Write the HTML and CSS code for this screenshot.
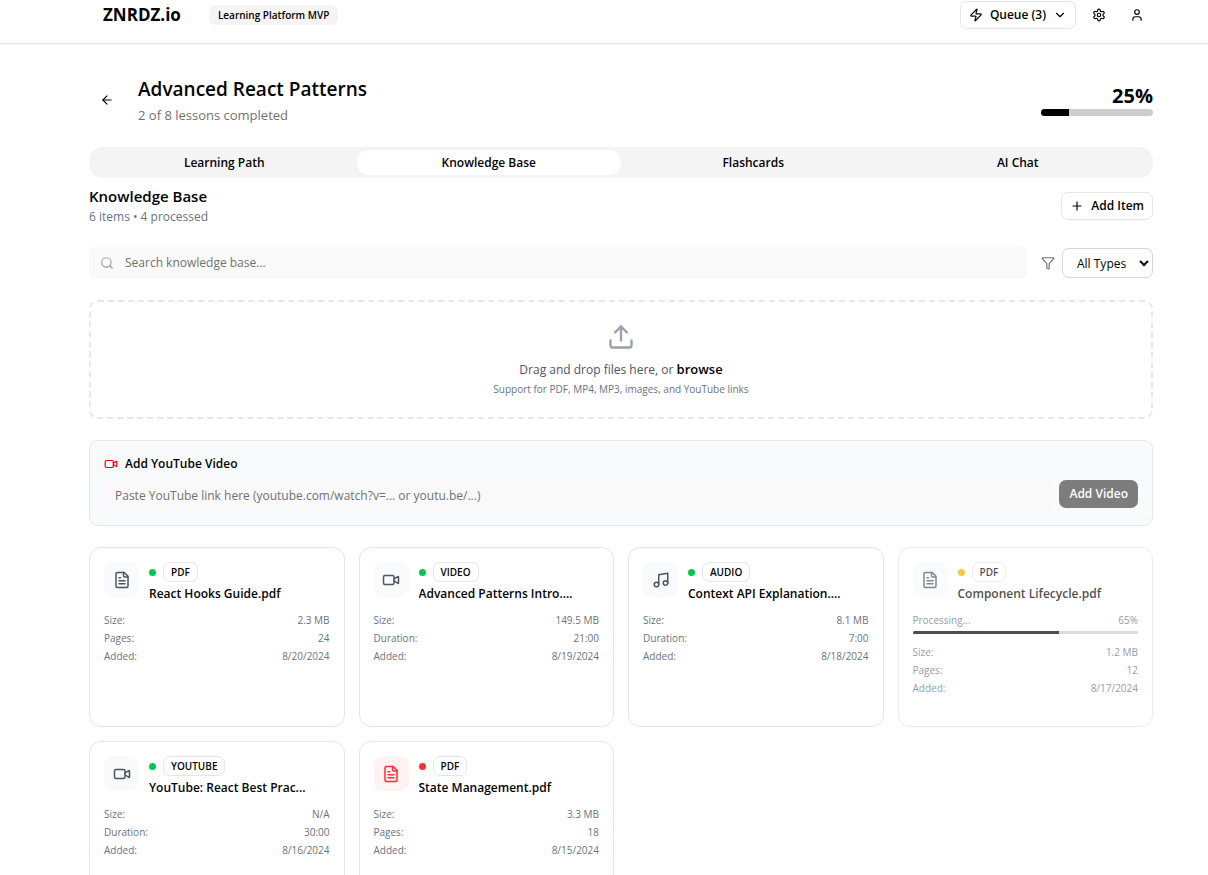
FILE: index.html
```
<!DOCTYPE html>
<html lang="en">
<head>
    <meta charset="UTF-8">
    <meta name="viewport" content="width=device-width, initial-scale=1.0">
    <title>ZNRDZ.io - Learning Platform</title>
    <link rel="stylesheet" href="styles.css">
</head>
<body>
    <!-- Icon set -->
    <svg class="icon-defs" aria-hidden="true">
        <symbol id="icon-zap" viewBox="0 0 24 24"><path d="M4 14a1 1 0 0 1-.78-1.63l9.9-10.2a.5.5 0 0 1 .86.46l-1.92 6.02A1 1 0 0 0 13 10h7a1 1 0 0 1 .78 1.63l-9.9 10.2a.5.5 0 0 1-.86-.46l1.92-6.02A1 1 0 0 0 11 14z"/></symbol>
        <symbol id="icon-chevron" viewBox="0 0 24 24"><path d="m6 9 6 6 6-6"/></symbol>
        <symbol id="icon-settings" viewBox="0 0 24 24"><path d="M12.22 2h-.44a2 2 0 0 0-2 2v.18a2 2 0 0 1-1 1.73l-.43.25a2 2 0 0 1-2 0l-.15-.08a2 2 0 0 0-2.73.73l-.22.38a2 2 0 0 0 .73 2.73l.15.1a2 2 0 0 1 1 1.72v.51a2 2 0 0 1-1 1.74l-.15.09a2 2 0 0 0-.73 2.73l.22.38a2 2 0 0 0 2.73.73l.15-.08a2 2 0 0 1 2 0l.43.25a2 2 0 0 1 1 1.73V20a2 2 0 0 0 2 2h.44a2 2 0 0 0 2-2v-.18a2 2 0 0 1 1-1.73l.43-.25a2 2 0 0 1 2 0l.15.08a2 2 0 0 0 2.73-.73l.22-.39a2 2 0 0 0-.73-2.73l-.15-.08a2 2 0 0 1-1-1.74v-.5a2 2 0 0 1 1-1.74l.15-.09a2 2 0 0 0 .73-2.73l-.22-.38a2 2 0 0 0-2.73-.73l-.15.08a2 2 0 0 1-2 0l-.43-.25a2 2 0 0 1-1-1.73V4a2 2 0 0 0-2-2z"/><circle cx="12" cy="12" r="3"/></symbol>
        <symbol id="icon-user" viewBox="0 0 24 24"><path d="M19 21v-2a4 4 0 0 0-4-4H9a4 4 0 0 0-4 4v2"/><circle cx="12" cy="7" r="4"/></symbol>
        <symbol id="icon-back" viewBox="0 0 24 24"><path d="m12 19-7-7 7-7"/><path d="M19 12H5"/></symbol>
        <symbol id="icon-plus" viewBox="0 0 24 24"><path d="M5 12h14"/><path d="M12 5v14"/></symbol>
        <symbol id="icon-search" viewBox="0 0 24 24"><circle cx="11" cy="11" r="8"/><path d="m21 21-4.3-4.3"/></symbol>
        <symbol id="icon-filter" viewBox="0 0 24 24"><path d="M10 20a1 1 0 0 0 .553.895l2 1A1 1 0 0 0 14 21v-7a2 2 0 0 1 .517-1.341L21.74 4.67A1 1 0 0 0 21 3H3a1 1 0 0 0-.742 1.67l7.225 7.989A2 2 0 0 1 10 14z"/></symbol>
        <symbol id="icon-upload" viewBox="0 0 24 24"><path d="M12 3v12"/><path d="m17 8-5-5-5 5"/><path d="M21 15v4a2 2 0 0 1-2 2H5a2 2 0 0 1-2-2v-4"/></symbol>
        <symbol id="icon-video" viewBox="0 0 24 24"><path d="m16 13 5.223 3.482a.5.5 0 0 0 .777-.416V7.87a.5.5 0 0 0-.752-.432L16 10.5"/><rect x="2" y="6" width="14" height="12" rx="2"/></symbol>
        <symbol id="icon-file" viewBox="0 0 24 24"><path d="M15 2H6a2 2 0 0 0-2 2v16a2 2 0 0 0 2 2h12a2 2 0 0 0 2-2V7Z"/><path d="M14 2v4a2 2 0 0 0 2 2h4"/><path d="M10 9H8"/><path d="M16 13H8"/><path d="M16 17H8"/></symbol>
        <symbol id="icon-music" viewBox="0 0 24 24"><path d="M9 18V5l12-2v13"/><circle cx="6" cy="18" r="3"/><circle cx="18" cy="16" r="3"/></symbol>
    </svg>

    <header class="header">
        <div class="brand">
            <span class="logo">ZNRDZ.io</span>
            <span class="tag">Learning Platform MVP</span>
        </div>
        <div class="header-actions">
            <button class="btn btn-outline" type="button">
                <svg class="icon"><use href="#icon-zap"/></svg>
                Queue (3)
                <svg class="icon"><use href="#icon-chevron"/></svg>
            </button>
            <div class="header-icons">
                <button class="btn-icon" type="button" aria-label="Settings"><svg class="icon"><use href="#icon-settings"/></svg></button>
                <button class="btn-icon" type="button" aria-label="Account"><svg class="icon"><use href="#icon-user"/></svg></button>
            </div>
        </div>
    </header>

    <main class="main">
        <div class="course">
            <button class="btn-icon" type="button" aria-label="Back"><svg class="icon"><use href="#icon-back"/></svg></button>
            <div class="course-info">
                <h1>Advanced React Patterns</h1>
                <p>2 of 8 lessons completed</p>
            </div>
            <div class="course-progress">
                <span class="percent">25%</span>
                <div class="bar"><div class="bar-fill" style="width: 25%"></div></div>
            </div>
        </div>

        <nav class="tabs">
            <button class="tab" type="button">Learning Path</button>
            <button class="tab active" type="button">Knowledge Base</button>
            <button class="tab" type="button">Flashcards</button>
            <button class="tab" type="button">AI Chat</button>
        </nav>

        <div class="section-head">
            <div>
                <h2>Knowledge Base</h2>
                <p>6 items • 4 processed</p>
            </div>
            <button class="btn btn-outline" type="button">
                <svg class="icon"><use href="#icon-plus"/></svg>
                Add Item
            </button>
        </div>

        <div class="filters">
            <div class="search">
                <svg class="icon"><use href="#icon-search"/></svg>
                <input type="text" placeholder="Search knowledge base..." aria-label="Search knowledge base">
            </div>
            <svg class="icon filter-icon"><use href="#icon-filter"/></svg>
            <select class="type-select" aria-label="Filter by type">
                <option>All Types</option>
                <option>PDF</option>
                <option>Video</option>
                <option>Audio</option>
                <option>YouTube</option>
            </select>
        </div>

        <div class="dropzone">
            <svg class="icon"><use href="#icon-upload"/></svg>
            <p class="drop-text">Drag and drop files here, or <button class="browse" type="button">browse</button></p>
            <p class="drop-hint">Support for PDF, MP4, MP3, images, and YouTube links</p>
        </div>

        <form class="youtube">
            <label class="youtube-label" for="youtubeLink">
                <svg class="icon"><use href="#icon-video"/></svg>
                Add YouTube Video
            </label>
            <div class="youtube-row">
                <input type="text" id="youtubeLink" placeholder="Paste YouTube link here (youtube.com/watch?v=... or youtu.be/...)">
                <button class="btn btn-primary" type="submit" disabled>Add Video</button>
            </div>
        </form>

        <div class="grid">
            <article class="card">
                <div class="card-head">
                    <div class="thumb"><svg class="icon"><use href="#icon-file"/></svg></div>
                    <div class="card-info">
                        <div class="card-type"><span class="dot"></span><span class="badge">PDF</span></div>
                        <h3>React Hooks Guide.pdf</h3>
                    </div>
                </div>
                <dl class="meta">
                    <div><dt>Size:</dt><dd>2.3 MB</dd></div>
                    <div><dt>Pages:</dt><dd>24</dd></div>
                    <div><dt>Added:</dt><dd>8/20/2024</dd></div>
                </dl>
            </article>

            <article class="card">
                <div class="card-head">
                    <div class="thumb"><svg class="icon"><use href="#icon-video"/></svg></div>
                    <div class="card-info">
                        <div class="card-type"><span class="dot"></span><span class="badge">VIDEO</span></div>
                        <h3>Advanced Patterns Intro....</h3>
                    </div>
                </div>
                <dl class="meta">
                    <div><dt>Size:</dt><dd>149.5 MB</dd></div>
                    <div><dt>Duration:</dt><dd>21:00</dd></div>
                    <div><dt>Added:</dt><dd>8/19/2024</dd></div>
                </dl>
            </article>

            <article class="card">
                <div class="card-head">
                    <div class="thumb"><svg class="icon"><use href="#icon-music"/></svg></div>
                    <div class="card-info">
                        <div class="card-type"><span class="dot"></span><span class="badge">AUDIO</span></div>
                        <h3>Context API Explanation....</h3>
                    </div>
                </div>
                <dl class="meta">
                    <div><dt>Size:</dt><dd>8.1 MB</dd></div>
                    <div><dt>Duration:</dt><dd>7:00</dd></div>
                    <div><dt>Added:</dt><dd>8/18/2024</dd></div>
                </dl>
            </article>

            <article class="card processing">
                <div class="card-head">
                    <div class="thumb"><svg class="icon"><use href="#icon-file"/></svg></div>
                    <div class="card-info">
                        <div class="card-type"><span class="dot"></span><span class="badge">PDF</span></div>
                        <h3>Component Lifecycle.pdf</h3>
                    </div>
                </div>
                <div class="card-progress">
                    <div class="card-progress-text"><span>Processing...</span><span>65%</span></div>
                    <div class="bar bar-thin"><div class="bar-fill" style="width: 65%"></div></div>
                </div>
                <dl class="meta">
                    <div><dt>Size:</dt><dd>1.2 MB</dd></div>
                    <div><dt>Pages:</dt><dd>12</dd></div>
                    <div><dt>Added:</dt><dd>8/17/2024</dd></div>
                </dl>
            </article>

            <article class="card">
                <div class="card-head">
                    <div class="thumb"><svg class="icon"><use href="#icon-video"/></svg></div>
                    <div class="card-info">
                        <div class="card-type"><span class="dot"></span><span class="badge">YOUTUBE</span></div>
                        <h3>YouTube: React Best Prac...</h3>
                    </div>
                </div>
                <dl class="meta">
                    <div><dt>Size:</dt><dd>N/A</dd></div>
                    <div><dt>Duration:</dt><dd>30:00</dd></div>
                    <div><dt>Added:</dt><dd>8/16/2024</dd></div>
                </dl>
            </article>

            <article class="card failed">
                <div class="card-head">
                    <div class="thumb"><svg class="icon"><use href="#icon-file"/></svg></div>
                    <div class="card-info">
                        <div class="card-type"><span class="dot"></span><span class="badge">PDF</span></div>
                        <h3>State Management.pdf</h3>
                    </div>
                </div>
                <dl class="meta">
                    <div><dt>Size:</dt><dd>3.3 MB</dd></div>
                    <div><dt>Pages:</dt><dd>18</dd></div>
                    <div><dt>Added:</dt><dd>8/15/2024</dd></div>
                </dl>
            </article>
        </div>
    </main>
</body>
</html>
```

FILE: styles.css
```
* {
    margin: 0;
    padding: 0;
    box-sizing: border-box;
}

body {
    font-family: "Open Sans", "Noto Sans", sans-serif;
    font-size: 12px;
    line-height: 18px;
    color: #030303;
    background: #fff;
}

button,
input,
select {
    font: inherit;
    color: inherit;
    border: none;
    background: none;
}

button {
    cursor: pointer;
}

.icon-defs {
    display: none;
}

.icon {
    width: 14px;
    height: 14px;
    flex-shrink: 0;
    fill: none;
    stroke: currentColor;
    stroke-width: 2;
    stroke-linecap: round;
    stroke-linejoin: round;
}

/* Buttons */
.btn {
    display: inline-flex;
    align-items: center;
    gap: 7px;
    height: 28px;
    padding: 0 8px;
    border-radius: 7px;
    font-weight: 600;
    white-space: nowrap;
}

.btn-outline {
    border: 1px solid #e5e5e5;
    background: #fff;
}

.btn-primary {
    padding: 0 10px;
    background: #030303;
    color: #fff;
}

.btn-primary:disabled {
    opacity: 0.5;
    cursor: default;
}

.btn-icon {
    display: flex;
    align-items: center;
    justify-content: center;
    width: 36px;
    height: 28px;
    border-radius: 7px;
}

/* Header */
.header {
    display: flex;
    align-items: center;
    justify-content: space-between;
    padding: 1px 53px 14px 103px;
    border-bottom: 1px solid #e5e5e5;
}

.brand {
    display: flex;
    align-items: center;
    gap: 28px;
}

.logo {
    font-size: 17px;
    font-weight: 700;
}

.tag {
    padding: 0 9px;
    border-radius: 7px;
    background: #f4f4f4;
    font-size: 10px;
    line-height: 20px;
    font-weight: 600;
}

.header-actions {
    display: flex;
    align-items: center;
    gap: 5px;
}

.header-icons {
    display: flex;
    gap: 2px;
}

.main {
    padding: 29px 55px 28px 89px;
}

/* Course title */
.course {
    display: flex;
    align-items: center;
    gap: 13px;
    margin-bottom: 21px;
}

.course-info {
    flex: 1;
}

.course-info h1 {
    font-size: 19px;
    line-height: 32px;
    font-weight: 600;
}

.course-info p {
    font-size: 13px;
    line-height: 21px;
    color: #717171;
}

.course-progress {
    width: 112px;
    text-align: right;
}

.percent {
    display: block;
    font-size: 20px;
    line-height: 26px;
    font-weight: 700;
}

.bar {
    height: 7px;
    border-radius: 7px;
    background: #cdcdcd;
    overflow: hidden;
}

.bar-fill {
    height: 100%;
    background: #030303;
}

.bar-thin {
    height: 3px;
}

/* Tabs */
.tabs {
    display: grid;
    grid-template-columns: repeat(4, 1fr);
    padding: 3px;
    border-radius: 14px;
    background: #f4f4f4;
}

.tab {
    height: 25px;
    border-radius: 12px;
    font-weight: 600;
}

.tab.active {
    background: #fff;
}

/* Section heading */
.section-head {
    display: flex;
    align-items: center;
    justify-content: space-between;
    margin: 7px 0 20px;
}

.section-head h2 {
    font-size: 15px;
    line-height: 22px;
    font-weight: 600;
}

.section-head p {
    line-height: 20px;
    color: #6a7282;
}

/* Search and filter */
.filters {
    display: flex;
    align-items: center;
    gap: 7px;
    margin-bottom: 21px;
}

.search {
    display: flex;
    align-items: center;
    gap: 11px;
    flex: 1;
    height: 32px;
    margin-right: 7px;
    padding: 0 11px;
    border-radius: 7px;
    background: #f9f9f9;
    color: #99a1af;
}

.search input {
    flex: 1;
    color: #030303;
    outline: none;
}

input::placeholder {
    color: #717171;
}

.filter-icon {
    color: #6a7282;
}

.type-select {
    width: 91px;
    height: 30px;
    padding: 0 0 0 10px;
    border: 1px solid #d1d5dc;
    border-radius: 7px;
    background: #fff;
}

/* Upload area */
.dropzone {
    display: flex;
    flex-direction: column;
    align-items: center;
    margin-bottom: 21px;
    padding: 21px 21px 19px;
    border: 2px dashed #e5e7eb;
    border-radius: 9px;
}

.dropzone .icon {
    width: 28px;
    height: 28px;
    margin-bottom: 8px;
    color: #99a1af;
}

.drop-text {
    line-height: 20px;
    color: #4a5565;
}

.drop-hint {
    font-size: 10px;
    line-height: 18px;
    color: #6a7282;
}

.browse {
    color: #030303;
    font-size: 13px;
    font-weight: 600;
}

/* YouTube form */
.youtube {
    margin-bottom: 21px;
    padding: 14px;
    border: 1px solid #e5e7eb;
    border-radius: 9px;
    background: #f9fafb;
}

.youtube-label {
    display: flex;
    align-items: center;
    gap: 7px;
    margin-bottom: 7px;
    font-weight: 600;
}

.youtube-label .icon {
    color: #e7000b;
}

.youtube-row {
    display: flex;
    gap: 7px;
}

.youtube-row input {
    flex: 1;
    height: 31px;
    padding: 0 11px;
    border-radius: 7px;
    background: #f9f9f9;
    outline: none;
}

/* Cards */
.grid {
    display: grid;
    grid-template-columns: repeat(4, 1fr);
    grid-auto-rows: 180px;
    gap: 14px;
}

.card {
    padding: 14px;
    border: 1px solid #e5e5e5;
    border-radius: 12px;
    background: #fff;
}

.card-head {
    display: flex;
    gap: 10px;
    margin-bottom: 8px;
}

.thumb {
    display: flex;
    align-items: center;
    justify-content: center;
    width: 35px;
    height: 35px;
    border-radius: 9px;
    background: #f9fafb;
    color: #4a5565;
}

.thumb .icon {
    width: 18px;
    height: 18px;
}

.card-info {
    flex: 1;
    min-width: 0;
}

.card-type {
    display: flex;
    align-items: center;
    gap: 7px;
    margin-bottom: 3px;
}

.dot {
    width: 7px;
    height: 7px;
    border-radius: 50%;
    background: #00c950;
}

.badge {
    padding: 0 7px;
    border: 1px solid #e5e5e5;
    border-radius: 7px;
    font-size: 10px;
    line-height: 18px;
    font-weight: 600;
}

.card h3 {
    font-size: 12px;
    line-height: 18px;
    font-weight: 600;
    white-space: nowrap;
    overflow: hidden;
    text-overflow: ellipsis;
}

.meta,
.card-progress-text {
    font-size: 10px;
    line-height: 18px;
    color: #6a7282;
}

.meta div,
.card-progress-text {
    display: flex;
    justify-content: space-between;
}

.card-progress {
    margin-bottom: 9px;
}

.card-progress .bar {
    margin-top: 2px;
}

.processing {
    opacity: 0.7;
}

.processing .dot {
    background: #f0b100;
}

.failed .dot {
    background: #fb2c36;
}

.failed .thumb {
    background: #fef2f2;
    color: #fb2c36;
}

@media (max-width: 768px) {
    .header,
    .main {
        padding-left: 20px;
        padding-right: 20px;
    }

    .grid {
        grid-template-columns: repeat(2, 1fr);
    }
}
```
